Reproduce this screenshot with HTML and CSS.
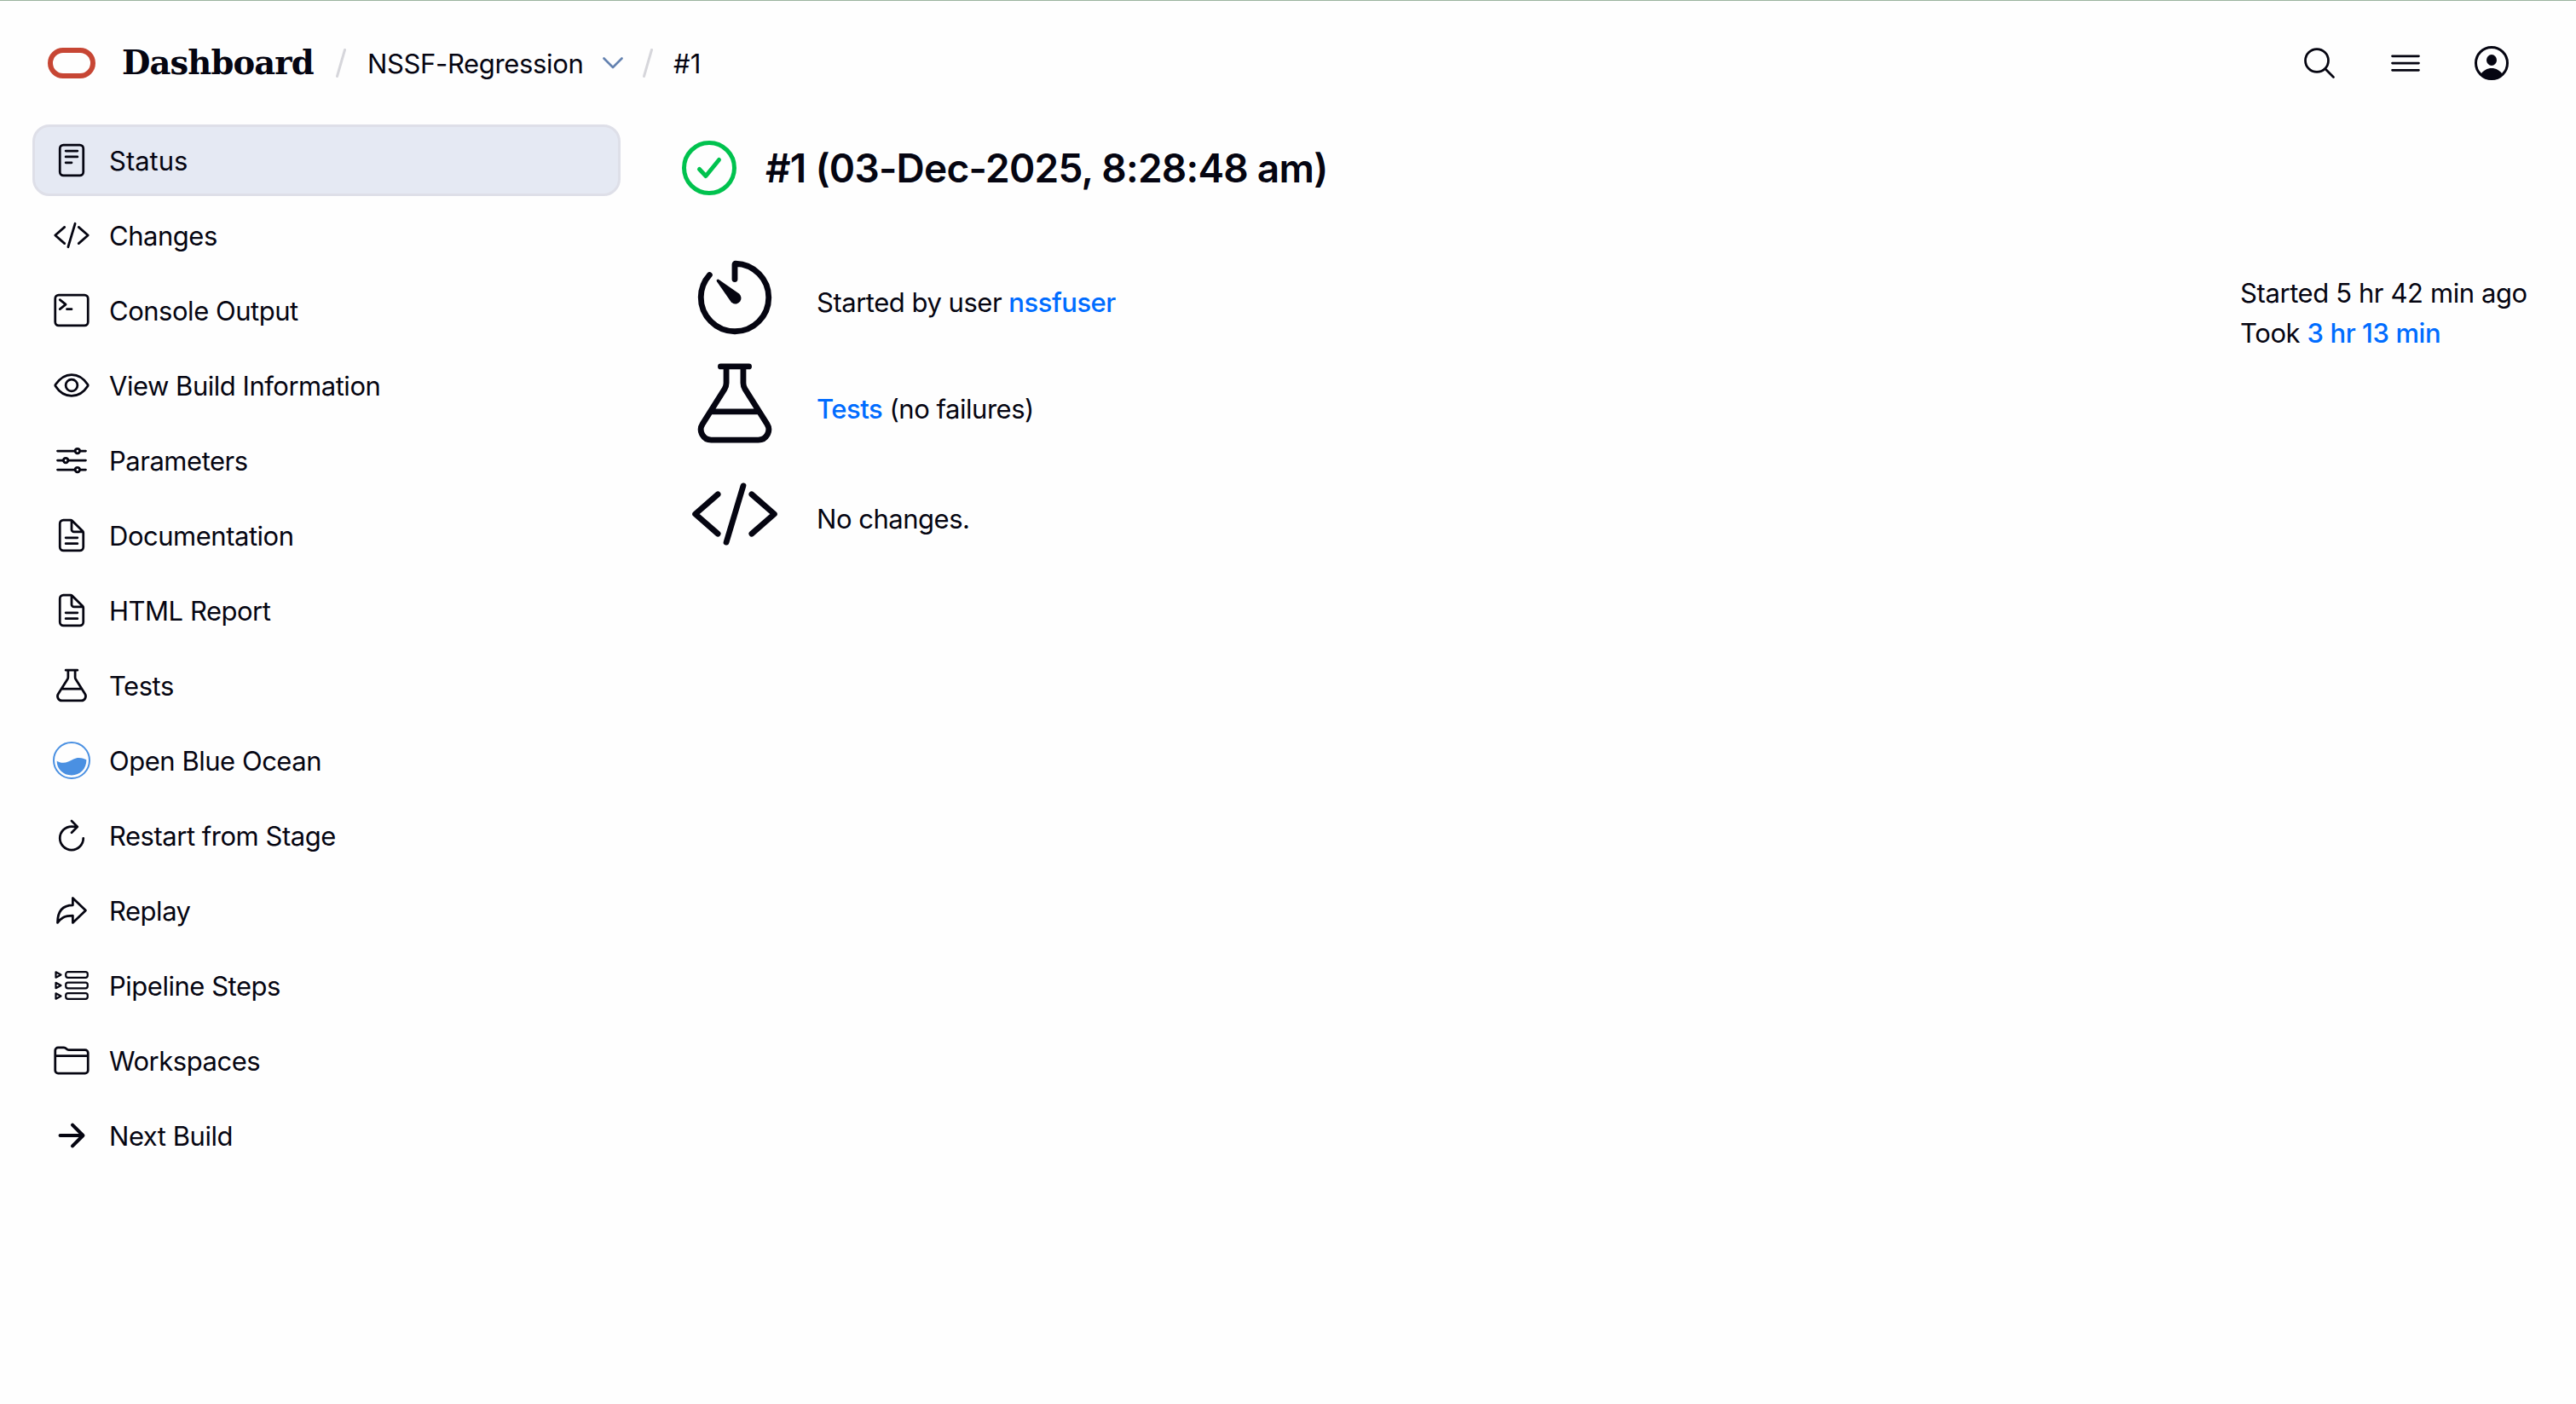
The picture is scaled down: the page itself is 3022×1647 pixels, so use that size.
FILE: index.html
```html
<!DOCTYPE html>
<html lang="en">
<head>
    <meta charset="UTF-8">
    <meta name="viewport" content="width=device-width, initial-scale=1.0">
    <title>NSSF-Regression #1</title>
    <link rel="stylesheet" href="styles.css">
</head>
<body>
    <header class="page-header">
        <a class="logo" href="#">
            <svg class="logo-mark" viewBox="0 0 56 36"><rect x="3" y="3" width="50" height="30" rx="15"/></svg>
            <span class="logo-text">Dashboard</span>
        </a>
        <svg class="separator" viewBox="0 0 12 34"><path d="M10.5 1.5L1.5 32.5"/></svg>
        <a class="crumb crumb-job" href="#">NSSF-Regression</a>
        <svg class="chevron" viewBox="0 0 24 14"><path d="M1.5 1.5L12 12 22.5 1.5"/></svg>
        <svg class="separator" viewBox="0 0 12 34"><path d="M10.5 1.5L1.5 32.5"/></svg>
        <a class="crumb crumb-build" href="#">#1</a>

        <div class="header-actions">
            <svg class="icon" viewBox="0 0 512 512"><path d="M221.09 64a157.09 157.09 0 10157.09 157.09A157.1 157.1 0 00221.09 64zM338.29 338.29L448 448"/></svg>
            <svg class="icon" viewBox="0 0 512 512"><path d="M76 160h360M76 256h360M76 352h360"/></svg>
            <svg class="icon" viewBox="0 0 44 44">
                <circle class="user-ring" cx="22" cy="22" r="18.5"/>
                <ellipse class="user-fill" cx="22" cy="18.5" rx="6" ry="6.5"/>
                <path class="user-fill" d="M9 35.5C12 30.5 17 28 22 28s10 2.5 13 7.5C31.5 39.5 27 41.5 22 41.5S12.5 39.5 9 35.5z"/>
            </svg>
        </div>
    </header>

    <div class="page-body">
        <nav class="side-panel">
            <a class="task active" href="#">
                <svg class="icon" viewBox="0 0 512 512"><rect x="96" y="48" width="320" height="416" rx="48"/><path d="M176 128h160M176 208h160M176 288h80"/></svg>
                <span>Status</span>
            </a>
            <a class="task" href="#">
                <svg class="icon" viewBox="0 0 512 512"><path d="M160 368L32 256l128-112M352 368l128-112-128-112M304 96l-96 320"/></svg>
                <span>Changes</span>
            </a>
            <a class="task" href="#">
                <svg class="icon" viewBox="0 0 512 512"><rect x="32" y="48" width="448" height="416" rx="48"/><path d="M96 112l80 64-80 64M192 240h64"/></svg>
                <span>Console Output</span>
            </a>
            <a class="task" href="#">
                <svg class="icon" viewBox="0 0 512 512"><path d="M255.66 112c-77.94 0-157.89 45.11-220.83 135.33a16 16 0 00-.27 17.77C82.92 340.8 161.8 400 255.66 400c92.84 0 173.34-59.38 221.79-135.25a16.14 16.14 0 000-17.47C428.89 172.28 347.8 112 255.66 112z"/><circle cx="256" cy="256" r="80"/></svg>
                <span>View Build Information</span>
            </a>
            <a class="task" href="#">
                <svg class="icon" viewBox="0 0 512 512"><path d="M368 128h80M64 128h240M368 384h80M64 384h240M208 256h240M64 256h80"/><circle cx="336" cy="128" r="32"/><circle cx="176" cy="256" r="32"/><circle cx="336" cy="384" r="32"/></svg>
                <span>Parameters</span>
            </a>
            <a class="task" href="#">
                <svg class="icon" viewBox="0 0 512 512"><path d="M416 221.25V416a48 48 0 01-48 48H144a48 48 0 01-48-48V96a48 48 0 0148-48h98.75a32 32 0 0122.62 9.37l141.26 141.26a32 32 0 019.37 22.62zM256 56v120a32 32 0 0032 32h120M176 288h160M176 368h160"/></svg>
                <span>Documentation</span>
            </a>
            <a class="task" href="#">
                <svg class="icon" viewBox="0 0 512 512"><path d="M416 221.25V416a48 48 0 01-48 48H144a48 48 0 01-48-48V96a48 48 0 0148-48h98.75a32 32 0 0122.62 9.37l141.26 141.26a32 32 0 019.37 22.62zM256 56v120a32 32 0 0032 32h120M176 288h160M176 368h160"/></svg>
                <span>HTML Report</span>
            </a>
            <a class="task" href="#">
                <svg class="icon" viewBox="0 0 512 512"><path d="M176 48h160M118 304h276M208 48v93.48a64.09 64.09 0 01-9.88 34.18L73.21 373.49C48.4 412.78 76.63 464 123.08 464h265.84c46.46 0 74.68-51.22 49.87-90.51L313.87 175.66A64.09 64.09 0 01304 141.48V48"/></svg>
                <span>Tests</span>
            </a>
            <a class="task" href="#">
                <svg class="icon ocean" viewBox="0 0 44 44">
                    <circle cx="22" cy="22" r="21"/>
                    <path d="M4.7 22.8C8 24.8 13 25.8 18 23.6 23 21.5 25.5 19 30.5 19c4 0 6.5 1 8.9 2.3C39.5 32 32 39.5 22 39.5S4.5 32 4.7 22.8z"/>
                </svg>
                <span>Open Blue Ocean</span>
            </a>
            <a class="task" href="#">
                <svg class="icon" viewBox="0 0 512 512"><path d="M320 146s24.36-12-64-12a160 160 0 10160 160M256 58l80 80-80 80"/></svg>
                <span>Restart from Stage</span>
            </a>
            <a class="task" href="#">
                <svg class="icon" viewBox="0 0 512 512"><path d="M448 256L272 88v96C103.57 184 64 304.77 64 424c48.61-62.24 91.6-96 208-96v96z"/></svg>
                <span>Replay</span>
            </a>
            <a class="task" href="#">
                <svg class="icon steps" viewBox="0 0 44 44">
                    <path d="M3.5 6.3v6.4l6-3.2zM3.5 18.8v6.4l6-3.2zM3.5 31.3v6.4l6-3.2z"/>
                    <rect x="15.2" y="6.2" width="25.6" height="6.6" rx="2.5"/>
                    <rect x="15.2" y="18.7" width="25.6" height="6.6" rx="2.5"/>
                    <rect x="15.2" y="31.2" width="25.6" height="6.6" rx="2.5"/>
                </svg>
                <span>Pipeline Steps</span>
            </a>
            <a class="task" href="#">
                <svg class="icon" viewBox="0 0 512 512"><path d="M440 432H72a40 40 0 01-40-40V120a40 40 0 0140-40h75.89a40 40 0 0122.19 6.72l27.84 18.56a40 40 0 0022.19 6.72H440a40 40 0 0140 40v240a40 40 0 01-40 40zM32 192h448"/></svg>
                <span>Workspaces</span>
            </a>
            <a class="task" href="#">
                <svg class="icon bold" viewBox="0 0 512 512"><path d="M268 112l144 144-144 144M392 256H100"/></svg>
                <span>Next Build</span>
            </a>
        </nav>

        <main class="main-panel">
            <div class="build-caption">
                <svg class="build-status" viewBox="0 0 64 64"><circle cx="32" cy="32" r="29.5"/><path d="M20.5 33.5l7.5 8L43.5 22.5"/></svg>
                <h1>#1 (03-Dec-2025, 8:28:48 am)</h1>
            </div>

            <div class="build-content">
                <div class="summary">
                    <div class="summary-row">
                        <svg class="icon-large" viewBox="0 0 512 512"><path d="M112.91 128A191.85 191.85 0 0064 254c-1.18 106.35 85.65 193.8 192 194 106.2.2 192-85.83 192-192 0-104.54-83.55-189.61-187.5-192a4.36 4.36 0 00-4.5 4.37V152"/><path class="needle" d="M233.38 278.63l-79-113a8.13 8.13 0 0111.32-11.32l113 79a32.5 32.5 0 01-37.25 53.26 33.21 33.21 0 01-8.07-7.94z"/></svg>
                        <p>Started by user <a href="#">nssfuser</a></p>
                    </div>
                    <div class="summary-row tests">
                        <svg class="icon-large" viewBox="0 0 512 512"><path d="M176 48h160M118 304h276M208 48v93.48a64.09 64.09 0 01-9.88 34.18L73.21 373.49C48.4 412.78 76.63 464 123.08 464h265.84c46.46 0 74.68-51.22 49.87-90.51L313.87 175.66A64.09 64.09 0 01304 141.48V48"/></svg>
                        <p><a href="#">Tests</a> (no failures)</p>
                    </div>
                    <div class="summary-row changes">
                        <svg class="icon-large" viewBox="0 0 512 512"><path d="M160 368L32 256l128-112M352 368l128-112-128-112M304 96l-96 320"/></svg>
                        <p>No changes.</p>
                    </div>
                </div>
                <div class="build-time">
                    <div>Started 5 hr 42 min ago</div>
                    <div>Took <a href="#">3 hr 13 min</a></div>
                </div>
            </div>
        </main>
    </div>
</body>
</html>
```
FILE: styles.css
```css
* {
    box-sizing: border-box;
}

body {
    margin: 0;
    min-height: 100vh;
    border-top: 1px solid #9bb49f;
    background-color: #fefefe;
    color: #050511;
    font-family: Inter, 'Liberation Sans', sans-serif;
    font-size: 31px;
    line-height: 47px;
    letter-spacing: -0.48px;
}

a {
    color: inherit;
    text-decoration: none;
}

svg {
    display: block;
    flex-shrink: 0;
    fill: none;
    stroke: currentColor;
    stroke-linecap: round;
    stroke-linejoin: round;
}

.icon {
    width: 44px;
    height: 44px;
    stroke-width: 32;
}

/* Header */
.page-header {
    display: flex;
    align-items: center;
    height: 145px;
    padding: 0 77px 0 56px;
}

.logo {
    display: flex;
    align-items: center;
    width: 338px;
    gap: 31px;
}

.logo-mark {
    width: 56px;
    height: 36px;
    color: #c74634;
    stroke-width: 6;
}

.logo-text {
    font-family: 'DejaVu Serif', serif;
    font-size: 38.5px;
    font-weight: bold;
    letter-spacing: -0.9px;
}

.separator {
    width: 12px;
    height: 34px;
    color: #d6d6db;
    stroke-width: 3;
}

.crumb {
    padding-top: 2px;
    white-space: nowrap;
}

.crumb-job {
    width: 301px;
    padding-left: 25px;
    letter-spacing: -0.35px;
}

.chevron {
    width: 24px;
    height: 14px;
    margin-right: 23px;
    color: #6482b0;
    stroke-width: 2.6;
}

.crumb-build {
    margin-left: 24px;
    letter-spacing: 0;
}

.header-actions {
    display: flex;
    gap: 57px;
    margin-left: auto;
}

.user-ring {
    stroke-width: 3;
}

.user-fill {
    fill: currentColor;
    stroke: none;
}

/* Side panel */
.page-body {
    display: flex;
    padding-left: 38px;
}

.side-panel {
    display: flex;
    flex-direction: column;
    gap: 4px;
    width: 690px;
}

.task {
    display: flex;
    align-items: center;
    gap: 22px;
    height: 84px;
    padding: 0 21px;
    border: 3px solid transparent;
    border-radius: 20px;
}

.task.active {
    background-color: #e5e9f3;
    border-color: #dedfe8;
    letter-spacing: 0;
}

.bold {
    stroke-width: 48;
}

.ocean {
    color: #4a90e2;
    stroke-width: 2;
}

.ocean path {
    fill: currentColor;
    stroke: none;
}

.steps {
    stroke-width: 2.2;
}

/* Main panel */
.main-panel {
    flex: 1;
    padding: 19px 57px 0 72px;
}

.build-caption {
    display: flex;
    align-items: center;
    gap: 34px;
    height: 64px;
}

.build-status {
    width: 64px;
    height: 64px;
    color: #00c24e;
    stroke-width: 5;
}

h1 {
    margin: 0;
    font-size: 46px;
    font-weight: 600;
    letter-spacing: -0.75px;
}

.build-content {
    display: flex;
    justify-content: space-between;
    padding-top: 67px;
}

.summary {
    display: flex;
    flex-direction: column;
    gap: 18px;
    padding-left: 9px;
}

.summary-row {
    display: flex;
    align-items: center;
    gap: 43px;
}

.summary-row p {
    margin: 10px 0 0;
}

.summary-row.tests p {
    margin-top: 12px;
}

.summary-row.changes {
    margin-top: 6px;
}

.icon-large {
    width: 106px;
    height: 106px;
    stroke-width: 33;
}

.needle {
    fill: currentColor;
    stroke: none;
}

.summary a,
.build-time a {
    color: #006cff;
    font-weight: 500;
}

.build-time {
    width: 337px;
    padding-top: 24px;
    letter-spacing: -0.4px;
    white-space: nowrap;
}
```
